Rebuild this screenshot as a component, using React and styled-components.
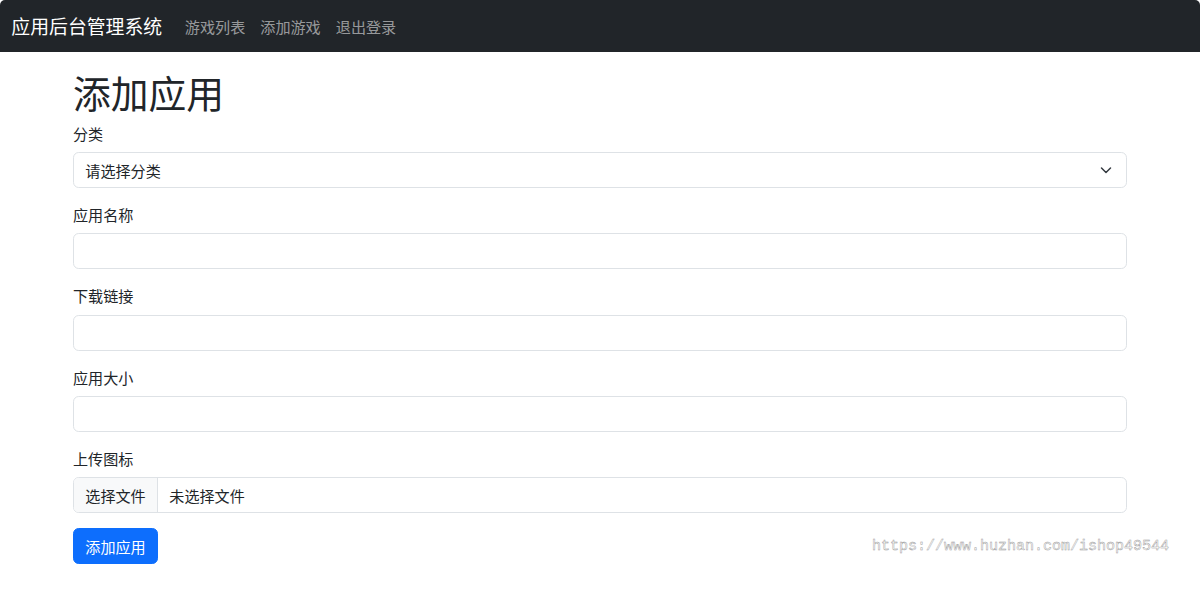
import React from "react";
import styled, { createGlobalStyle } from "styled-components";

const Global = createGlobalStyle`
  html { font-size: 15.1px; }
  body {
    margin: 0;
    background: #fff;
    color: #212529;
    font-family: "Noto Sans CJK SC", "Noto Sans", "Liberation Sans", sans-serif;
    font-size: 1rem;
    line-height: 1.5;
  }
  * { box-sizing: border-box; }
`;

const Navbar = styled.nav`
  height: 52px;
  background: #212529;
  border-radius: 5px 5px 0 0;
  display: flex;
  align-items: center;
  padding: 0 0.75rem;
`;

const Brand = styled.a`
  color: #fff;
  font-size: 1.25rem;
  line-height: 1.5;
  margin-right: 1rem;
  text-decoration: none;
`;

const NavList = styled.ul`
  display: flex;
  list-style: none;
  margin: 0;
  padding: 0;
`;

const NavLink = styled.a`
  display: block;
  padding: 0.5rem;
  color: rgba(255, 255, 255, 0.55);
  text-decoration: none;
  font-size: 1rem;
`;

const Container = styled.main`
  width: 1054px;
  margin: 17px auto 0;
  position: relative;
`;

const Title = styled.h1`
  margin: 0 0 0.5rem;
  font-size: 2.5rem;
  font-weight: 400;
  line-height: 1.2;
`;

const Field = styled.div`
  margin-bottom: 1rem;
`;

const Label = styled.label`
  display: inline-block;
  margin-bottom: 0.5rem;
`;

const Control = styled.input`
  display: block;
  width: 100%;
  height: 36px;
  padding: 0.375rem 0.75rem;
  font: inherit;
  color: #212529;
  background: #fff;
  border: 1px solid #dee2e6;
  border-radius: 0.375rem;
  outline: none;
`;

const SelectBox = styled.div`
  position: relative;
  display: flex;
  align-items: center;
  width: 100%;
  height: 36px;
  padding: 0 2.25rem 0 0.75rem;
  border: 1px solid #dee2e6;
  border-radius: 0.375rem;
`;

const Chevron = styled.svg`
  position: absolute;
  right: 14px;
  top: 50%;
  transform: translateY(-50%);
`;

const FileBox = styled.div`
  display: flex;
  align-items: stretch;
  height: 36px;
  border: 1px solid #dee2e6;
  border-radius: 0.375rem;
  overflow: hidden;
`;

const FileButton = styled.span`
  display: flex;
  align-items: center;
  padding: 0 0.75rem;
  background: #f8f9fa;
  border-right: 1px solid #dee2e6;
`;

const FileName = styled.span`
  display: flex;
  align-items: center;
  padding: 0 0.75rem;
`;

const Submit = styled.button`
  height: 36px;
  padding: 0 0.75rem;
  font: inherit;
  color: #fff;
  background: #0d6efd;
  border: 1px solid #0d6efd;
  border-radius: 0.375rem;
`;

const Watermark = styled.span`
  position: absolute;
  right: -42px;
  bottom: 6px;
  font-family: "Liberation Mono", "DejaVu Sans Mono", monospace;
  font-size: 15px;
  color: #fff;
  -webkit-text-stroke: 0.45px #9a9a9a;
  letter-spacing: 0;
`;

const fields = ["应用名称", "下载链接", "应用大小"];

export default function App() {
  return (
    <>
      <Global />
      <Navbar>
        <Brand>应用后台管理系统</Brand>
        <NavList>
          <li><NavLink>游戏列表</NavLink></li>
          <li><NavLink>添加游戏</NavLink></li>
          <li><NavLink>退出登录</NavLink></li>
        </NavList>
      </Navbar>
      <Container>
        <Title>添加应用</Title>
        <Field>
          <Label>分类</Label>
          <SelectBox>
            请选择分类
            <Chevron width="12" height="12" viewBox="0 0 12 12">
              <path d="M1.5 4 6 8.5 10.5 4" fill="none" stroke="#343a40" strokeWidth="1.5" strokeLinecap="round" strokeLinejoin="round" />
            </Chevron>
          </SelectBox>
        </Field>
        {fields.map((f) => (
          <Field key={f}>
            <Label>{f}</Label>
            <Control type="text" />
          </Field>
        ))}
        <Field>
          <Label>上传图标</Label>
          <FileBox>
            <FileButton>选择文件</FileButton>
            <FileName>未选择文件</FileName>
          </FileBox>
        </Field>
        <Submit>添加应用</Submit>
        <Watermark>https://www.huzhan.com/ishop49544</Watermark>
      </Container>
    </>
  );
}
